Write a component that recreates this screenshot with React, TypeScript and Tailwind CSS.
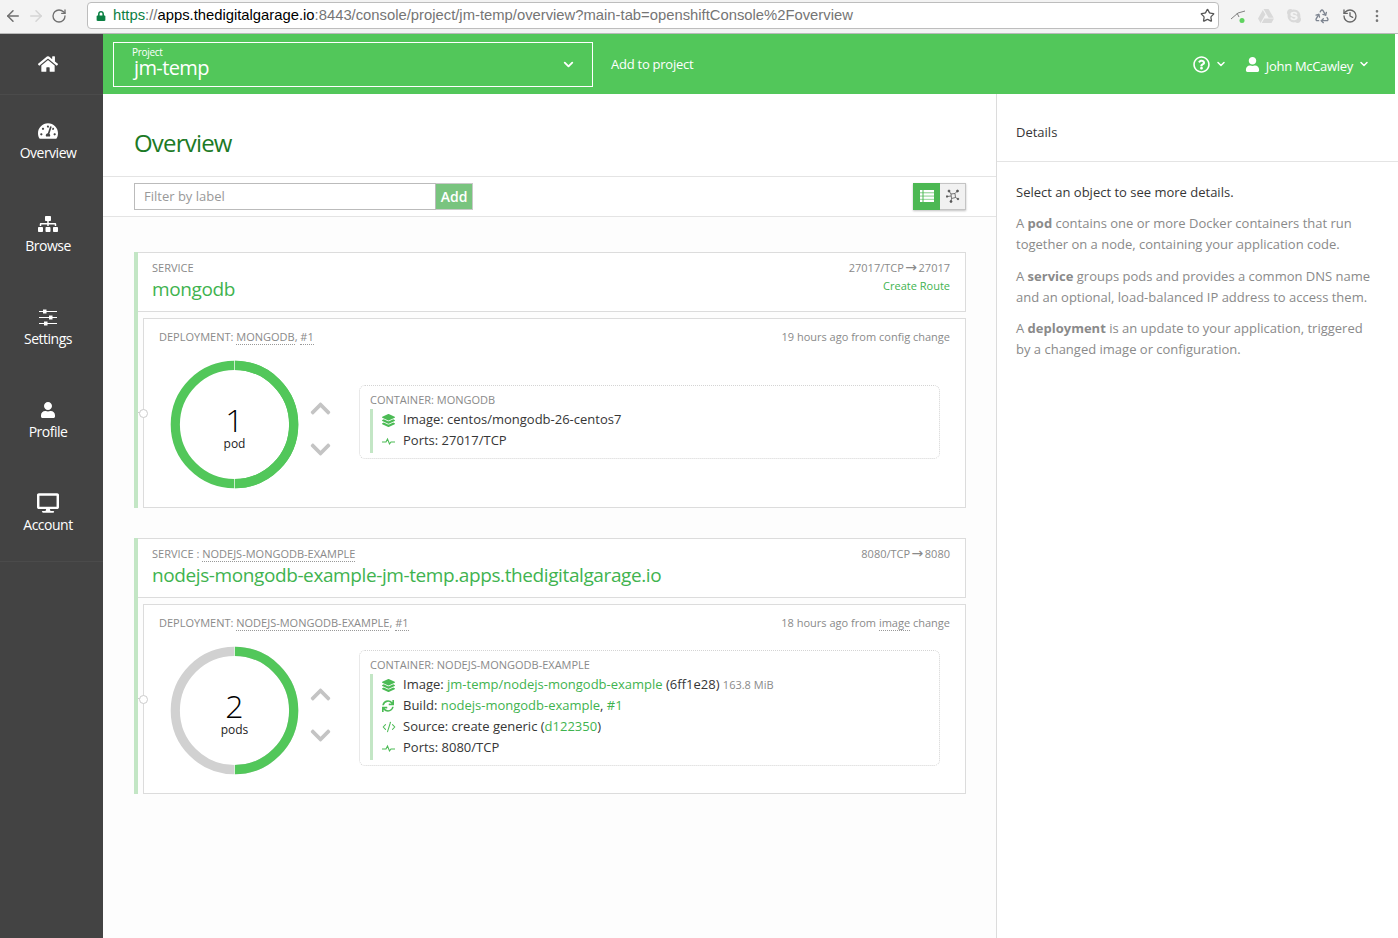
import { ReactNode } from "react"
import { ArrowLeft, ArrowRight, RotateCw, Star, EllipsisVertical, Recycle, ChevronDown, CodeXml, History } from "lucide-react"
import {
    FaHome, FaTachometerAlt, FaSitemap, FaUser, FaDesktop, FaLock, FaLayerGroup, FaSync,
    FaChevronUp, FaChevronDown, FaRegQuestionCircle, FaSkype, FaGoogleDrive,
} from "react-icons/fa"

function Sliders() {
    return (
        <svg width="18" height="17" viewBox="0 0 18 17" fill="#fff">
            <rect x="0" y="2" width="18" height="1" /><rect x="4" y="0.5" width="3.5" height="4" />
            <rect x="0" y="8" width="18" height="1" /><rect x="10" y="6.5" width="3.5" height="4" />
            <rect x="0" y="14" width="18" height="1" /><rect x="5" y="12.5" width="3.5" height="4" />
        </svg>
    )
}

function Pulse() {
    return (
        <svg width="13" height="9" viewBox="0 0 13 9" fill="none" stroke="currentColor" strokeWidth="1.1">
            <path d="M0 5 H4 L5.5 2 L7.5 7 L9 5 H13" />
        </svg>
    )
}

const nav = [
    { label: "Overview", icon: <FaTachometerAlt size={20} /> },
    { label: "Browse", icon: <FaSitemap size={20} /> },
    { label: "Settings", icon: <Sliders /> },
    { label: "Profile", icon: <FaUser size={16} /> },
    { label: "Account", icon: <FaDesktop size={22} /> },
]

function Dotted({ children }: { children: ReactNode }) {
    return <span className="border-b border-dotted border-[#999]">{children}</span>
}

function Green({ children }: { children: ReactNode }) {
    return <span className="text-[#3fb34f]">{children}</span>
}

function Arrow() {
    return <span className="font-['DejaVu_Sans',sans-serif] text-[14px] leading-[12px] mx-[1.5px]">→</span>
}

function Donut({ count, label, partial }: { count: number; label: string; partial?: boolean }) {
    return (
        <div className="relative w-[130px] h-[130px] shrink-0">
            <svg width="130" height="130" viewBox="0 0 130 130">
                <circle cx="64.5" cy="64.5" r="59.2" fill="none" stroke={partial ? "#d1d1d1" : "#52c75a"} strokeWidth="9.2" />
                <path d="M64.5 5.3 A59.2 59.2 0 0 1 64.5 123.7" fill="none" stroke="#52c75a" strokeWidth="9.2" />
                <line x1="64.5" y1="0" x2="64.5" y2="10" stroke="#fff" strokeWidth="0.7" />
                <line x1="64.5" y1="119" x2="64.5" y2="129" stroke="#fff" strokeWidth="0.7" />
            </svg>
            <div className="absolute inset-0 flex flex-col items-center pt-[43px] pr-[1px] text-black">
                <span className="text-[32px] leading-[34px] font-light">{count}</span>
                <span className="text-[12px] leading-[15px] -mt-[1px] text-[#222]">{label}</span>
            </div>
        </div>
    )
}

function Row({ icon, children }: { icon: ReactNode; children: ReactNode }) {
    return (
        <div className="flex items-center h-[21px] text-[13px] text-[#363636]">
            <span className="w-[30px] pl-[9px] text-[#4cbb55] shrink-0">{icon}</span>
            <span className="whitespace-nowrap">{children}</span>
        </div>
    )
}

function Deployment({ left, right, count, label, partial, container, rows }: {
    left: ReactNode
    right: ReactNode
    count: number
    label: string
    partial?: boolean
    container: string
    rows: ReactNode
}) {
    return (
        <div className="relative ml-[5px] mt-[6px] h-[190px] border border-[#dcdcdc] bg-white px-[15px]">
            <span className="absolute left-[-6px] top-[93px] w-[4px] h-[1px] bg-[#ccc]" />
            <span className="absolute left-[-5px] top-[90px] w-[9px] h-[9px] rounded-full border border-[#ccc] bg-white" />
            <div className="flex justify-between items-center h-[36px] text-[11px] text-[#8a8a8a]">
                <span>{left}</span>
                <span>{right}</span>
            </div>
            <div className="flex items-center mt-[5px] pl-[11px] pr-[10px]">
                <Donut count={count} label={label} partial={partial} />
                <div className="flex flex-col items-center gap-[18px] w-[40px] text-[#c4c4c4] shrink-0 pt-[7px]">
                    <FaChevronUp size={23} />
                    <FaChevronDown size={23} />
                </div>
                <div className="flex-1 ml-[19px] mb-[7px] border border-dotted border-[#d4d4d4] rounded-[6px] px-[10px] pt-[6px] pb-[5px]">
                    <div className="text-[11px] leading-[15px] text-[#8a8a8a] uppercase">Container: {container}</div>
                    <div className="border-l-[3px] border-[#c3e6c5] mt-[2px] py-[1px]">{rows}</div>
                </div>
            </div>
        </div>
    )
}

function Service({ label, title, right }: { label: ReactNode; title: string; right: ReactNode }) {
    return (
        <div className="flex justify-between h-[60px] border border-l-0 border-[#dcdcdc] bg-white pl-[14px] pr-[15px] pt-[7px]">
            <div>
                <div className="text-[11px] leading-[16px] text-[#8a8a8a]">{label}</div>
                <div className="text-[19px] leading-[26px] tracking-[-0.4px] text-[#3fb34f] whitespace-nowrap">{title}</div>
            </div>
            <div className="text-right text-[11px] leading-[16px] text-[#8a8a8a]">{right}</div>
        </div>
    )
}

export default function App() {
    return (
        <div className="flex flex-col w-[1398px] h-[938px] overflow-hidden bg-white font-['Open_Sans',sans-serif]">
            {/* browser chrome */}
            <div className="flex items-center h-[34px] shrink-0 bg-[#f3f3f3] border-b border-[#b9b9b9] pb-[2px]">
                <div className="flex items-center w-[87px] pl-[4px] gap-[3px] text-[#6f6f6f] shrink-0">
                    <ArrowLeft size={18} />
                    <ArrowRight size={18} className="ml-[2px] text-[#d5d5d5]" />
                    <RotateCw size={16} className="ml-[3px]" />
                </div>
                <div className="flex items-center w-[1132px] h-[27px] shrink-0 bg-white border border-[#bdbdbd] rounded-[4px] pl-[8px] pr-[3px] font-['Liberation_Sans',sans-serif] text-[14.8px] text-[#757575]">
                    <FaLock size={10} className="text-[#0b8043] mr-[7px]" />
                    <span className="whitespace-nowrap">
                        <span className="text-[#0b8043]">https</span>://<span className="text-black">apps.thedigitalgarage.io</span>:8443/console/project/jm-temp/overview?main-tab=openshiftConsole%2Foverview
                    </span>
                    <Star size={15} className="ml-auto text-[#555]" />
                </div>
                <div className="flex items-center flex-1 pl-[11px] text-[#8a8a8a]">
                    <svg width="16" height="16" viewBox="0 0 16 16" fill="none">
                        <path d="M1 11 L8 5 L15 3 M7 5 L9 9" stroke="#808080" strokeWidth="1" />
                        <circle cx="12" cy="12.5" r="2.5" fill="#5fd35f" />
                    </svg>
                    <FaGoogleDrive size={16} className="ml-[12px] text-[#d9d9d9]" />
                    <FaSkype size={16} className="ml-[12px] text-[#d9d9d9]" />
                    <Recycle size={16} className="ml-[12px] text-[#7d8490]" />
                    <History size={16} className="ml-[12px] text-[#666]" />
                    <EllipsisVertical size={16} className="ml-[11px] text-[#777]" />
                </div>
            </div>

            <div className="flex flex-1 min-h-0">
                {/* sidebar */}
                <aside className="w-[103px] shrink-0 bg-[#434343] text-white">
                    <div className="flex justify-center items-center h-[61px] pr-[7px] border-b border-[#4b4b4b]">
                        <FaHome size={20} />
                    </div>
                    <div className="border-b border-[#4b4b4b] pb-[1px]">
                        {nav.map((item) => (
                            <div key={item.label} className="flex flex-col items-center h-[93px] pt-[24px] pr-[7px] text-[14px] tracking-[-0.5px]">
                                <span className="flex items-center justify-center h-[24px]">{item.icon}</span>
                                <span className="leading-[19px]">{item.label}</span>
                            </div>
                        ))}
                    </div>
                </aside>

                <div className="flex flex-col flex-1 min-w-0">
                    {/* green header */}
                    <header className="flex items-center h-[60px] w-[1292px] shrink-0 bg-[#52c75a] text-white pl-[10px] pr-[25px]">
                        <div className="flex items-center justify-between w-[480px] h-[45px] border border-white pl-[18px] pr-[16px]">
                            <div className="pb-[3px]">
                                <div className="text-[10px] leading-[10px] tracking-[-0.3px] font-medium">Project</div>
                                <div className="ml-[2px] text-[20px] leading-[22px] tracking-[-0.6px] font-medium">jm-temp</div>
                            </div>
                            <ChevronDown size={15} strokeWidth={3} />
                        </div>
                        <span className="ml-[18px] mt-[2px] text-[13px] tracking-[-0.25px]">Add to project</span>
                        <div className="flex items-center ml-auto">
                            <FaRegQuestionCircle size={17} />
                            <ChevronDown size={12} strokeWidth={3} className="ml-[5px]" />
                            <FaUser size={15} className="ml-[18px]" />
                            <span className="ml-[6px] mt-[6px] text-[13px] tracking-[-0.3px]">John McCawley</span>
                            <ChevronDown size={12} strokeWidth={3} className="ml-[5px]" />
                        </div>
                    </header>

                    <div className="flex flex-1 min-h-0">
                        {/* main column */}
                        <main className="w-[893px] shrink-0 bg-[#fdfdfd]">
                            <div className="flex items-center h-[83px] bg-white pl-[31px] pt-[16px] text-[24px] tracking-[-0.8px] text-[#1c7a25] border-b border-[#e4e4e4]">
                                Overview
                            </div>
                            <div className="flex items-center h-[40px] bg-white border-b border-[#e4e4e4] pl-[31px] pr-[30px] pb-[1px]">
                                <input
                                    readOnly
                                    placeholder="Filter by label"
                                    className="w-[302px] h-[27px] border border-[#bbb] px-[9px] text-[13px] outline-none placeholder:text-[#999]"
                                />
                                <button className="flex items-center justify-center w-[37px] h-[27px] bg-[#79c47f] border border-[#c9c9c9] border-l-0 text-white text-[14px] font-semibold">
                                    Add
                                </button>
                                <div className="flex ml-auto h-[27px] shadow-[0_1px_2px_rgba(0,0,0,0.25)]">
                                    <div className="flex items-center justify-center w-[27px] bg-[#4cb853]">
                                        <svg width="14" height="12" viewBox="0 0 14 12" fill="#fff">
                                            <rect x="0" y="0" width="2.5" height="2.5" /><rect x="3.5" y="0" width="10.5" height="2.5" />
                                            <rect x="0" y="3.2" width="2.5" height="2.5" /><rect x="3.5" y="3.2" width="10.5" height="2.5" />
                                            <rect x="0" y="6.4" width="2.5" height="2.5" /><rect x="3.5" y="6.4" width="10.5" height="2.5" />
                                            <rect x="0" y="9.5" width="2.5" height="2.5" /><rect x="3.5" y="9.5" width="10.5" height="2.5" />
                                        </svg>
                                    </div>
                                    <div className="flex items-center justify-center w-[26px] bg-[#f1f1f1] border border-l-0 border-[#c4c4c4]">
                                        <svg width="14" height="14" viewBox="0 0 14 14" fill="#555" stroke="#555" strokeWidth="0.8">
                                            <path d="M5 5 L9 4.5 L9.5 8.5 L5.5 9.5 Z M5 5 L3 2 M9 4.5 L11.5 2 M9.5 8.5 L12 10 M5.5 9.5 L5 12.5 M5 7 L1 7.5" fill="none" />
                                            <circle cx="3" cy="2" r="1" /><circle cx="11.5" cy="2" r="1" /><circle cx="12" cy="10" r="0.8" /><circle cx="5" cy="12.5" r="1" /><circle cx="1" cy="7.5" r="0.8" />
                                        </svg>
                                    </div>
                                </div>
                            </div>

                            <div className="pl-[31px] pr-[30px] pt-[35px] flex flex-col gap-[30px]">
                                <div className="border-l-[4px] border-[#c3e6c5]">
                                    <Service
                                        label="SERVICE"
                                        title="mongodb"
                                        right={<>
                                            <div>27017/TCP<Arrow />27017</div>
                                            <div className="mt-[2px] text-[#3fb34f]">Create Route</div>
                                        </>}
                                    />
                                    <Deployment
                                        left={<>DEPLOYMENT: <Dotted>MONGODB</Dotted>, <Dotted>#1</Dotted></>}
                                        right="19 hours ago from config change"
                                        count={1}
                                        label="pod"
                                        container="mongodb"
                                        rows={<>
                                            <Row icon={<FaLayerGroup size={13} />}>Image: centos/mongodb-26-centos7</Row>
                                            <Row icon={<Pulse />}>Ports: 27017/TCP</Row>
                                        </>}
                                    />
                                </div>
                                <div className="border-l-[4px] border-[#c3e6c5]">
                                    <Service
                                        label={<>SERVICE : <Dotted>NODEJS-MONGODB-EXAMPLE</Dotted></>}
                                        title="nodejs-mongodb-example-jm-temp.apps.thedigitalgarage.io"
                                        right={<>8080/TCP<Arrow />8080</>}
                                    />
                                    <Deployment
                                        left={<>DEPLOYMENT: <Dotted>NODEJS-MONGODB-EXAMPLE</Dotted>, <Dotted>#1</Dotted></>}
                                        right={<>18 hours ago from <Dotted>image</Dotted> change</>}
                                        count={2}
                                        label="pods"
                                        partial
                                        container="nodejs-mongodb-example"
                                        rows={<>
                                            <Row icon={<FaLayerGroup size={13} />}>
                                                Image: <Green>jm-temp/nodejs-mongodb-example</Green> (6ff1e28) <span className="text-[11px] text-[#8a8a8a]">163.8 MiB</span>
                                            </Row>
                                            <Row icon={<FaSync size={12} />}>Build: <Green>nodejs-mongodb-example</Green>, <Green>#1</Green></Row>
                                            <Row icon={<CodeXml size={14} strokeWidth={1.8} />}>Source: create generic (<Green>d122350</Green>)</Row>
                                            <Row icon={<Pulse />}>Ports: 8080/TCP</Row>
                                        </>}
                                    />
                                </div>
                            </div>
                        </main>

                        {/* details panel */}
                        <section className="flex-1 border-l border-[#dcdcdc] bg-white text-[13px] leading-[21px] text-[#8a8a8a]">
                            <div className="flex items-center h-[68px] pl-[19px] pt-[10px] text-[#363636] border-b border-[#e4e4e4]">Details</div>
                            <div className="pl-[19px] pr-[24px] pt-[19.7px] flex flex-col gap-[10.5px]">
                                <p className="text-[#363636]">Select an object to see more details.</p>
                                <p>A <b className="font-bold">pod</b> contains one or more Docker containers that run together on a node, containing your application code.</p>
                                <p>A <b className="font-bold">service</b> groups pods and provides a common DNS name and an optional, load-balanced IP address to access them.</p>
                                <p>A <b className="font-bold">deployment</b> is an update to your application, triggered by a changed image or configuration.</p>
                            </div>
                        </section>
                    </div>
                </div>
            </div>
        </div>
    )
}
